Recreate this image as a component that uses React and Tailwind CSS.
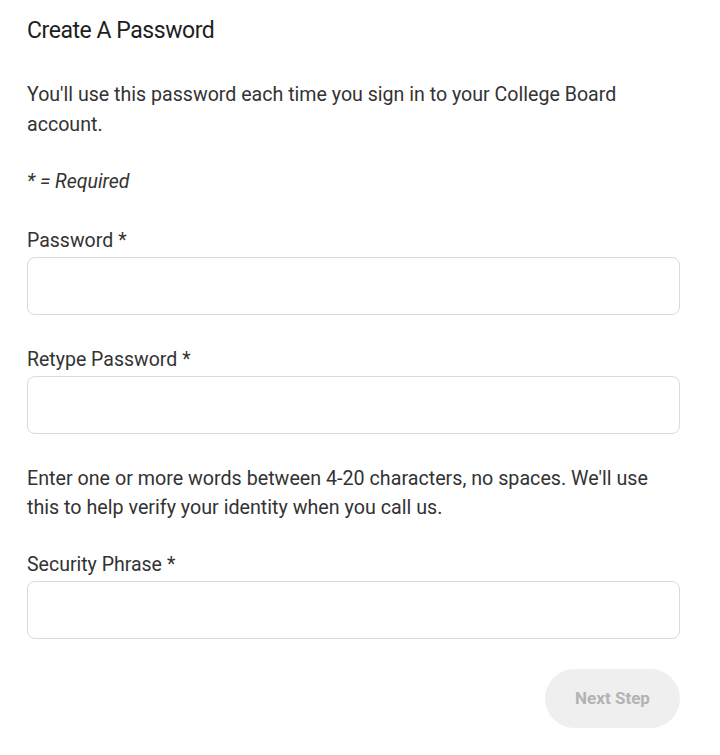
import React from "react";

function Field({ label, className = "" }) {
  return (
    <div className={className}>
      <label className="block text-[19.5px] leading-[24px] text-[#333333]">
        {label}
        <span className="ml-[5px]">*</span>
      </label>
      <input
        type="text"
        className="mt-[4px] block w-full h-[58px] rounded-[8px] border border-[#dadada] bg-white px-4 outline-none"
      />
    </div>
  );
}

export default function App() {
  return (
    <div
      className="w-[720px] min-h-[755px] bg-white px-[27px] pt-[17px] text-[#333333]"
      style={{ fontFamily: "Roboto, 'Liberation Sans', sans-serif" }}
    >
      <h1 className="text-[23px] leading-[28px] tracking-[-0.45px] text-[#1e1e1e] font-normal">
        Create A Password
      </h1>

      <p className="mt-[35px] w-[653px] text-[19.6px] leading-[30px]">
        You'll use this password each time you sign in to your College Board account.
      </p>

      <p className="mt-[30px] text-[19.5px] leading-[24px] italic">* = Required</p>

      <Field label="Password" className="mt-[35px] w-[653px]" />
      <Field label="Retype Password" className="mt-[33px] w-[653px]" />

      <p className="mt-[30px] text-[19.7px] leading-[29px] w-[640px]">
        Enter one or more words between 4-20 characters, no spaces. We'll use this to help verify your identity when you call us.
      </p>

      <Field label="Security Phrase" className="mt-[31px] w-[653px]" />

      <div className="mt-[30px] flex w-[653px] justify-end">
        <button
          type="button"
          disabled
          className="h-[59px] w-[135px] rounded-full bg-[#efefef] text-[17px] font-bold text-[#b3b3b3]"
        >
          Next Step
        </button>
      </div>
    </div>
  );
}
